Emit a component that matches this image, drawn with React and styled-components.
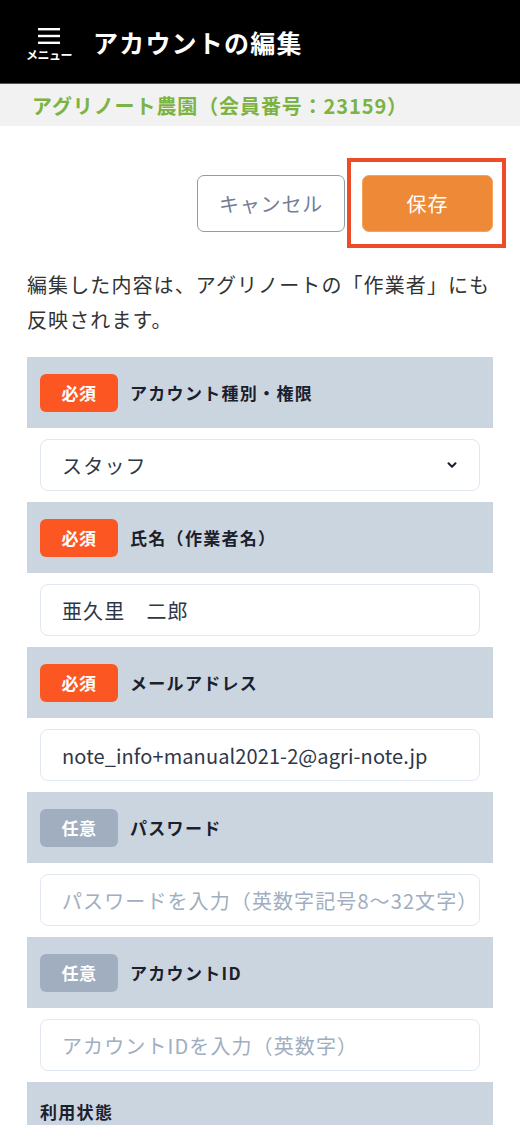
import React from 'react'
import styled, { createGlobalStyle } from 'styled-components'

const GlobalStyle = createGlobalStyle`
    body{
        margin: 0;
        background: #fff;
        font-family: "Noto Sans CJK JP", "Noto Sans", sans-serif;
    }
`;

const fields = [
    { type: 'select', required: true, label: 'アカウント種別・権限', value: 'スタッフ' },
    { type: 'input', required: true, label: '氏名（作業者名）', value: '亜久里　二郎' },
    { type: 'input', required: true, label: 'メールアドレス', value: 'note_info+manual2021-2@agri-note.jp', latin: true },
    { type: 'input', required: false, label: 'パスワード', placeholder: 'パスワードを入力（英数字記号8〜32文字）' },
    { type: 'input', required: false, label: 'アカウントID', placeholder: 'アカウントIDを入力（英数字）' },
]

function App() {
    return (
        <Page>
            <GlobalStyle />
            <TopBar>
                <MenuButton>
                    <svg width="24" height="18" viewBox="0 0 24 18">
                        <rect x="1" y="1" width="22" height="2.4" fill="#fff" />
                        <rect x="1" y="7.8" width="22" height="2.4" fill="#fff" />
                        <rect x="1" y="14.6" width="22" height="2.4" fill="#fff" />
                    </svg>
                    <span>メニュー</span>
                </MenuButton>
                <Title>アカウントの編集</Title>
            </TopBar>
            <FarmBar>アグリノート農園（会員番号：23159）</FarmBar>

            <Content>
                <ButtonRow>
                    <CancelButton>キャンセル</CancelButton>
                    <Highlight>
                        <SaveButton>保存</SaveButton>
                    </Highlight>
                </ButtonRow>

                <Notice>編集した内容は、アグリノートの「作業者」にも反映されます。</Notice>

                <Form>
                    {fields.map((f) => (
                        <Field key={f.label}>
                            <FieldHead>
                                <Badge $required={f.required}>{f.required ? '必須' : '任意'}</Badge>
                                <Label>{f.label}</Label>
                            </FieldHead>
                            <FieldBody>
                                {f.type === 'select' ? (
                                    <SelectBox>
                                        <span>{f.value}</span>
                                        <svg width="14" height="14" viewBox="0 0 24 24" fill="none" stroke="#1a202c" strokeWidth="3.5" strokeLinecap="round" strokeLinejoin="round">
                                            <polyline points="6 9 12 15 18 9" />
                                        </svg>
                                    </SelectBox>
                                ) : (
                                    <TextBox $placeholder={!f.value} $latin={f.latin}>{f.value || f.placeholder}</TextBox>
                                )}
                            </FieldBody>
                        </Field>
                    ))}
                    <Field>
                        <FieldHead $plain>
                            <Label>利用状態</Label>
                        </FieldHead>
                    </Field>
                </Form>
            </Content>
        </Page>
    )
}

const Page = styled.div`
    width: 520px;
    min-height: 1125px;
    overflow: hidden;
`;

const TopBar = styled.header`
    height: 84px;
    background: #000;
    display: flex;
    align-items: center;
    padding-left: 26px;
    gap: 21px;
    border-bottom: 1px solid #555;
    box-sizing: border-box;
`;

const MenuButton = styled.div`
    display: flex;
    flex-direction: column;
    align-items: center;
    gap: 3px;
    margin-top: 6px;
    span{
        color: #fff;
        font-size: 12px;
        font-weight: 700;
        line-height: 14px;
        letter-spacing: -0.5px;
    }
`;

const Title = styled.h1`
    margin: 0;
    color: #fff;
    font-size: 25px;
    font-weight: 700;
    letter-spacing: 1.2px;
`;

const FarmBar = styled.div`
    height: 42px;
    background: #f2f2f2;
    display: flex;
    align-items: center;
    padding-left: 32px;
    color: #7cb342;
    font-size: 20px;
    font-weight: 700;
    letter-spacing: 0.9px;
`;

const Content = styled.main`
    padding: 32px 27px 0;
`;

const ButtonRow = styled.div`
    display: flex;
    justify-content: flex-end;
    align-items: center;
    gap: 2px;
    margin-right: -13px;
`;

const CancelButton = styled.button`
    width: 148px;
    height: 57px;
    background: #fff;
    border: 1.5px solid #8d9cb0;
    border-radius: 7px;
    color: #718096;
    font-family: inherit;
    font-size: 20px;
    letter-spacing: 0.8px;
`;

const Highlight = styled.div`
    border: 4px solid #ec4c27;
    padding: 13px 9px 12px 11px;
    display: flex;
`;

const SaveButton = styled.button`
    width: 131px;
    height: 57px;
    background: #ee8a37;
    border: 1px solid #f4a35e;
    border-radius: 7px;
    color: #fff;
    font-family: inherit;
    font-size: 20px;
    letter-spacing: 1px;
`;

const Notice = styled.p`
    margin: 19px 0 20px;
    font-size: 20px;
    line-height: 35px;
    letter-spacing: 1.1px;
    color: #333;
`;

const Form = styled.div`
    display: flex;
    flex-direction: column;
`;

const Field = styled.section`
    display: flex;
    flex-direction: column;
`;

const FieldHead = styled.div`
    height: 71px;
    background: #cbd5e0;
    display: flex;
    align-items: ${p => p.$plain ? 'flex-start' : 'center'};
    gap: 12px;
    padding-left: 13px;
    padding-top: ${p => p.$plain ? '17px' : '0'};
    box-sizing: border-box;
`;

const Badge = styled.span`
    width: 78px;
    height: 38px;
    border-radius: 6px;
    background: ${p => p.$required ? '#fc5722' : '#a0aec0'};
    color: #fff;
    font-size: 17px;
    font-weight: 700;
    letter-spacing: 0.5px;
    display: flex;
    align-items: center;
    justify-content: center;
`;

const Label = styled.span`
    font-size: 17px;
    font-weight: 700;
    letter-spacing: 1.3px;
    color: #1a202c;
`;

const FieldBody = styled.div`
    padding: 11px 13px;
`;

const boxStyle = `
    height: 52px;
    box-sizing: border-box;
    border: 1px solid #e2e8f0;
    border-radius: 8px;
    background: #fff;
    display: flex;
    align-items: center;
    padding: 0 21px;
    font-size: 20px;
    white-space: nowrap;
    overflow: hidden;
`;

const SelectBox = styled.div`
    ${boxStyle}
    justify-content: space-between;
    color: #2d3748;
    letter-spacing: 1.2px;
    padding-right: 20px;
`;

const TextBox = styled.div`
    ${boxStyle}
    color: ${p => p.$placeholder ? '#a0aec0' : '#2d3748'};
    letter-spacing: ${p => p.$latin ? '0.1px' : '1.1px'};
`;

export default App
